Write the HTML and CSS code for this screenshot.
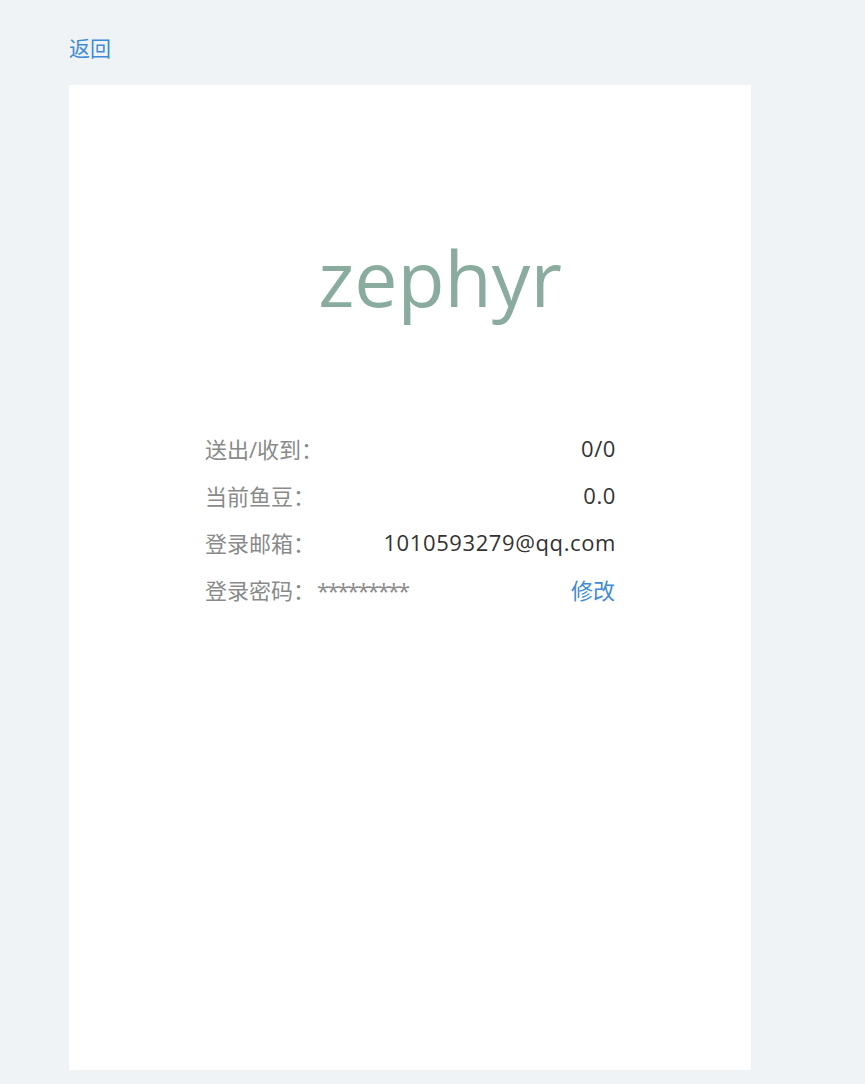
FILE: index.html
```html
<!DOCTYPE html>
<html lang="zh">
<head>
<meta charset="utf-8">
<link rel="stylesheet" href="styles.css">
</head>
<body>
<div class="page">
  <a class="back" href="#">返回</a>
  <div class="card">
    <h1 class="name">zephyr</h1>
    <div class="info">
      <div class="row"><span class="label">送出/收到：</span><span class="value">0/0</span></div>
      <div class="row"><span class="label">当前鱼豆：</span><span class="value">0.0</span></div>
      <div class="row"><span class="label">登录邮箱：</span><span class="value">1010593279@qq.com</span></div>
      <div class="row"><span class="label">登录密码：<span class="mask">*********</span></span><a class="edit" href="#">修改</a></div>
    </div>
  </div>
</div>
</body>
</html>
```

FILE: styles.css
```css
html, body {
  margin: 0;
  padding: 0;
  background: #f0f3f6;
  font-family: "Open Sans", "Noto Sans CJK SC", sans-serif;
}
.page {
  padding: 34px 0 14px 69px;
}
.back {
  display: block;
  width: max-content;
  color: #3f8bd4;
  text-decoration: none;
  font-size: 21px;
  line-height: 28px;
  margin-bottom: 23px;
}
.card {
  width: 682px;
  height: 985px;
  background: #fff;
  box-sizing: border-box;
  padding-top: 143px;
}
.name {
  margin: 0;
  padding-left: 60px;
  text-align: center;
  font-weight: 400;
  font-size: 77px;
  line-height: 100px;
  color: #8aac9e;
}
.info {
  width: 410px;
  margin: 96px auto 0;
}
.row {
  display: flex;
  justify-content: space-between;
  align-items: center;
  height: 47px;
  font-size: 22px;
}
.label {
  color: #8a8a8a;
}
.mask {
  color: #8a8a8a;
  margin-left: 2px;
  letter-spacing: -2px;
}
.value {
  color: #333;
  letter-spacing: 0.6px;
  margin-right: -1px;
}
.edit {
  color: #3f8bd4;
  text-decoration: none;
}
```
